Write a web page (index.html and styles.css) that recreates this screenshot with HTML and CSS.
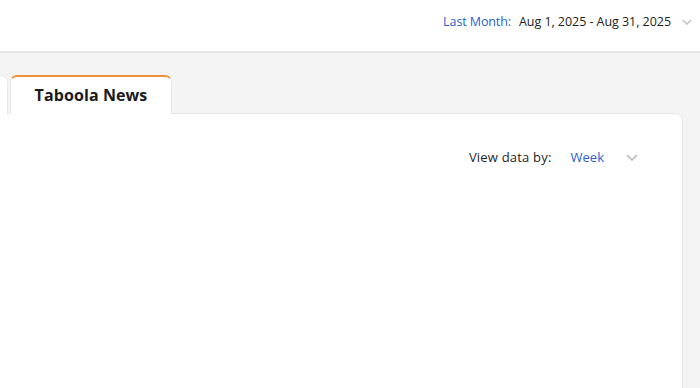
FILE: index.html
```html
<!DOCTYPE html>
<html lang="en">

<head>
    <meta charset="UTF-8" />
    <title>Taboola News</title>
    <link rel="stylesheet" href="styles.css">
</head>

<body>

    <!-- Barra superior com o período -->
    <header class="topbar">
        <div class="period">
            <span class="period-label">Last Month:</span>
            <span class="period-range">Aug 1, 2025 - Aug 31, 2025</span>
            <svg class="chevron" width="10" height="6" viewBox="0 0 10 6">
                <path d="M1 1l4 4 4-4" fill="none" stroke="currentColor" stroke-width="1.6" />
            </svg>
        </div>
    </header>

    <main class="content">
        <!-- Abas -->
        <div class="tabs">
            <div class="tab tab-prev"></div>
            <div class="tab tab-active">Taboola News</div>
        </div>

        <!-- Cartão do gráfico -->
        <section class="card">
            <div class="card-toolbar">
                <span class="view-label">View data by:</span>
                <span class="view-value">Week</span>
                <svg class="chevron" width="12" height="7" viewBox="0 0 12 7">
                    <path d="M1 1l5 5 5-5" fill="none" stroke="currentColor" stroke-width="1.8" />
                </svg>
            </div>
            <div class="chart"></div>
        </section>
    </main>

</body>

</html>
```

FILE: styles.css
```css
body {
    margin: 0;
    font-family: "Open Sans", "Liberation Sans", sans-serif;
    background: #f4f4f4;
    color: #1f1f1f;
    height: 388px;
    overflow: hidden;
}

/* Barra superior */
.topbar {
    height: 51px;
    background: #fff;
    border-bottom: 2px solid #e4e4e4;
    display: flex;
    justify-content: flex-end;
    align-items: center;
    padding-right: 8px;
}

.period {
    display: flex;
    align-items: center;
    font-size: 12.5px;
    margin-top: -8px;
}

.period-label {
    color: #2a62d4;
    margin-right: 8px;
    letter-spacing: -0.1px;
}

.period-range {
    color: #222;
    letter-spacing: -0.05px;
}

.period .chevron {
    color: #c6c6c6;
    margin-left: 11px;
}

/* Abas */
.content {
    padding-top: 22px;
}

.tabs {
    display: flex;
    gap: 2px;
    height: 39px;
    position: relative;
    z-index: 1;
}

.tab {
    background: #fff;
    border: 1px solid #e9e9e9;
    border-bottom: none;
    border-radius: 7px 7px 0 0;
}

.tab-prev {
    width: 8px;
    margin-left: -1px;
    border-left: none;
    border-radius: 0 7px 0 0;
}

.tab-active {
    width: 160px;
    border-top: 2px solid #f0903a;
    font-weight: 700;
    font-size: 16px;
    text-align: center;
    line-height: 37px;
    color: #1b1b1b;
    letter-spacing: 0.1px;
}

/* Cartão */
.card {
    background: #fff;
    margin-right: 17px;
    height: 280px;
    border: 1px solid #e9e9e9;
    border-left: none;
    border-radius: 0 8px 0 0;
    margin-top: -1px;
}

.card-toolbar {
    display: flex;
    justify-content: flex-end;
    align-items: center;
    padding: 34px 44px 0 0;
    font-size: 13px;
}

.view-label {
    color: #1f1f1f;
    letter-spacing: 0.2px;
}

.view-value {
    color: #2a62d4;
    margin-left: 19px;
}

.card-toolbar .chevron {
    color: #c6c6c6;
    margin-left: 22px;
}
```
